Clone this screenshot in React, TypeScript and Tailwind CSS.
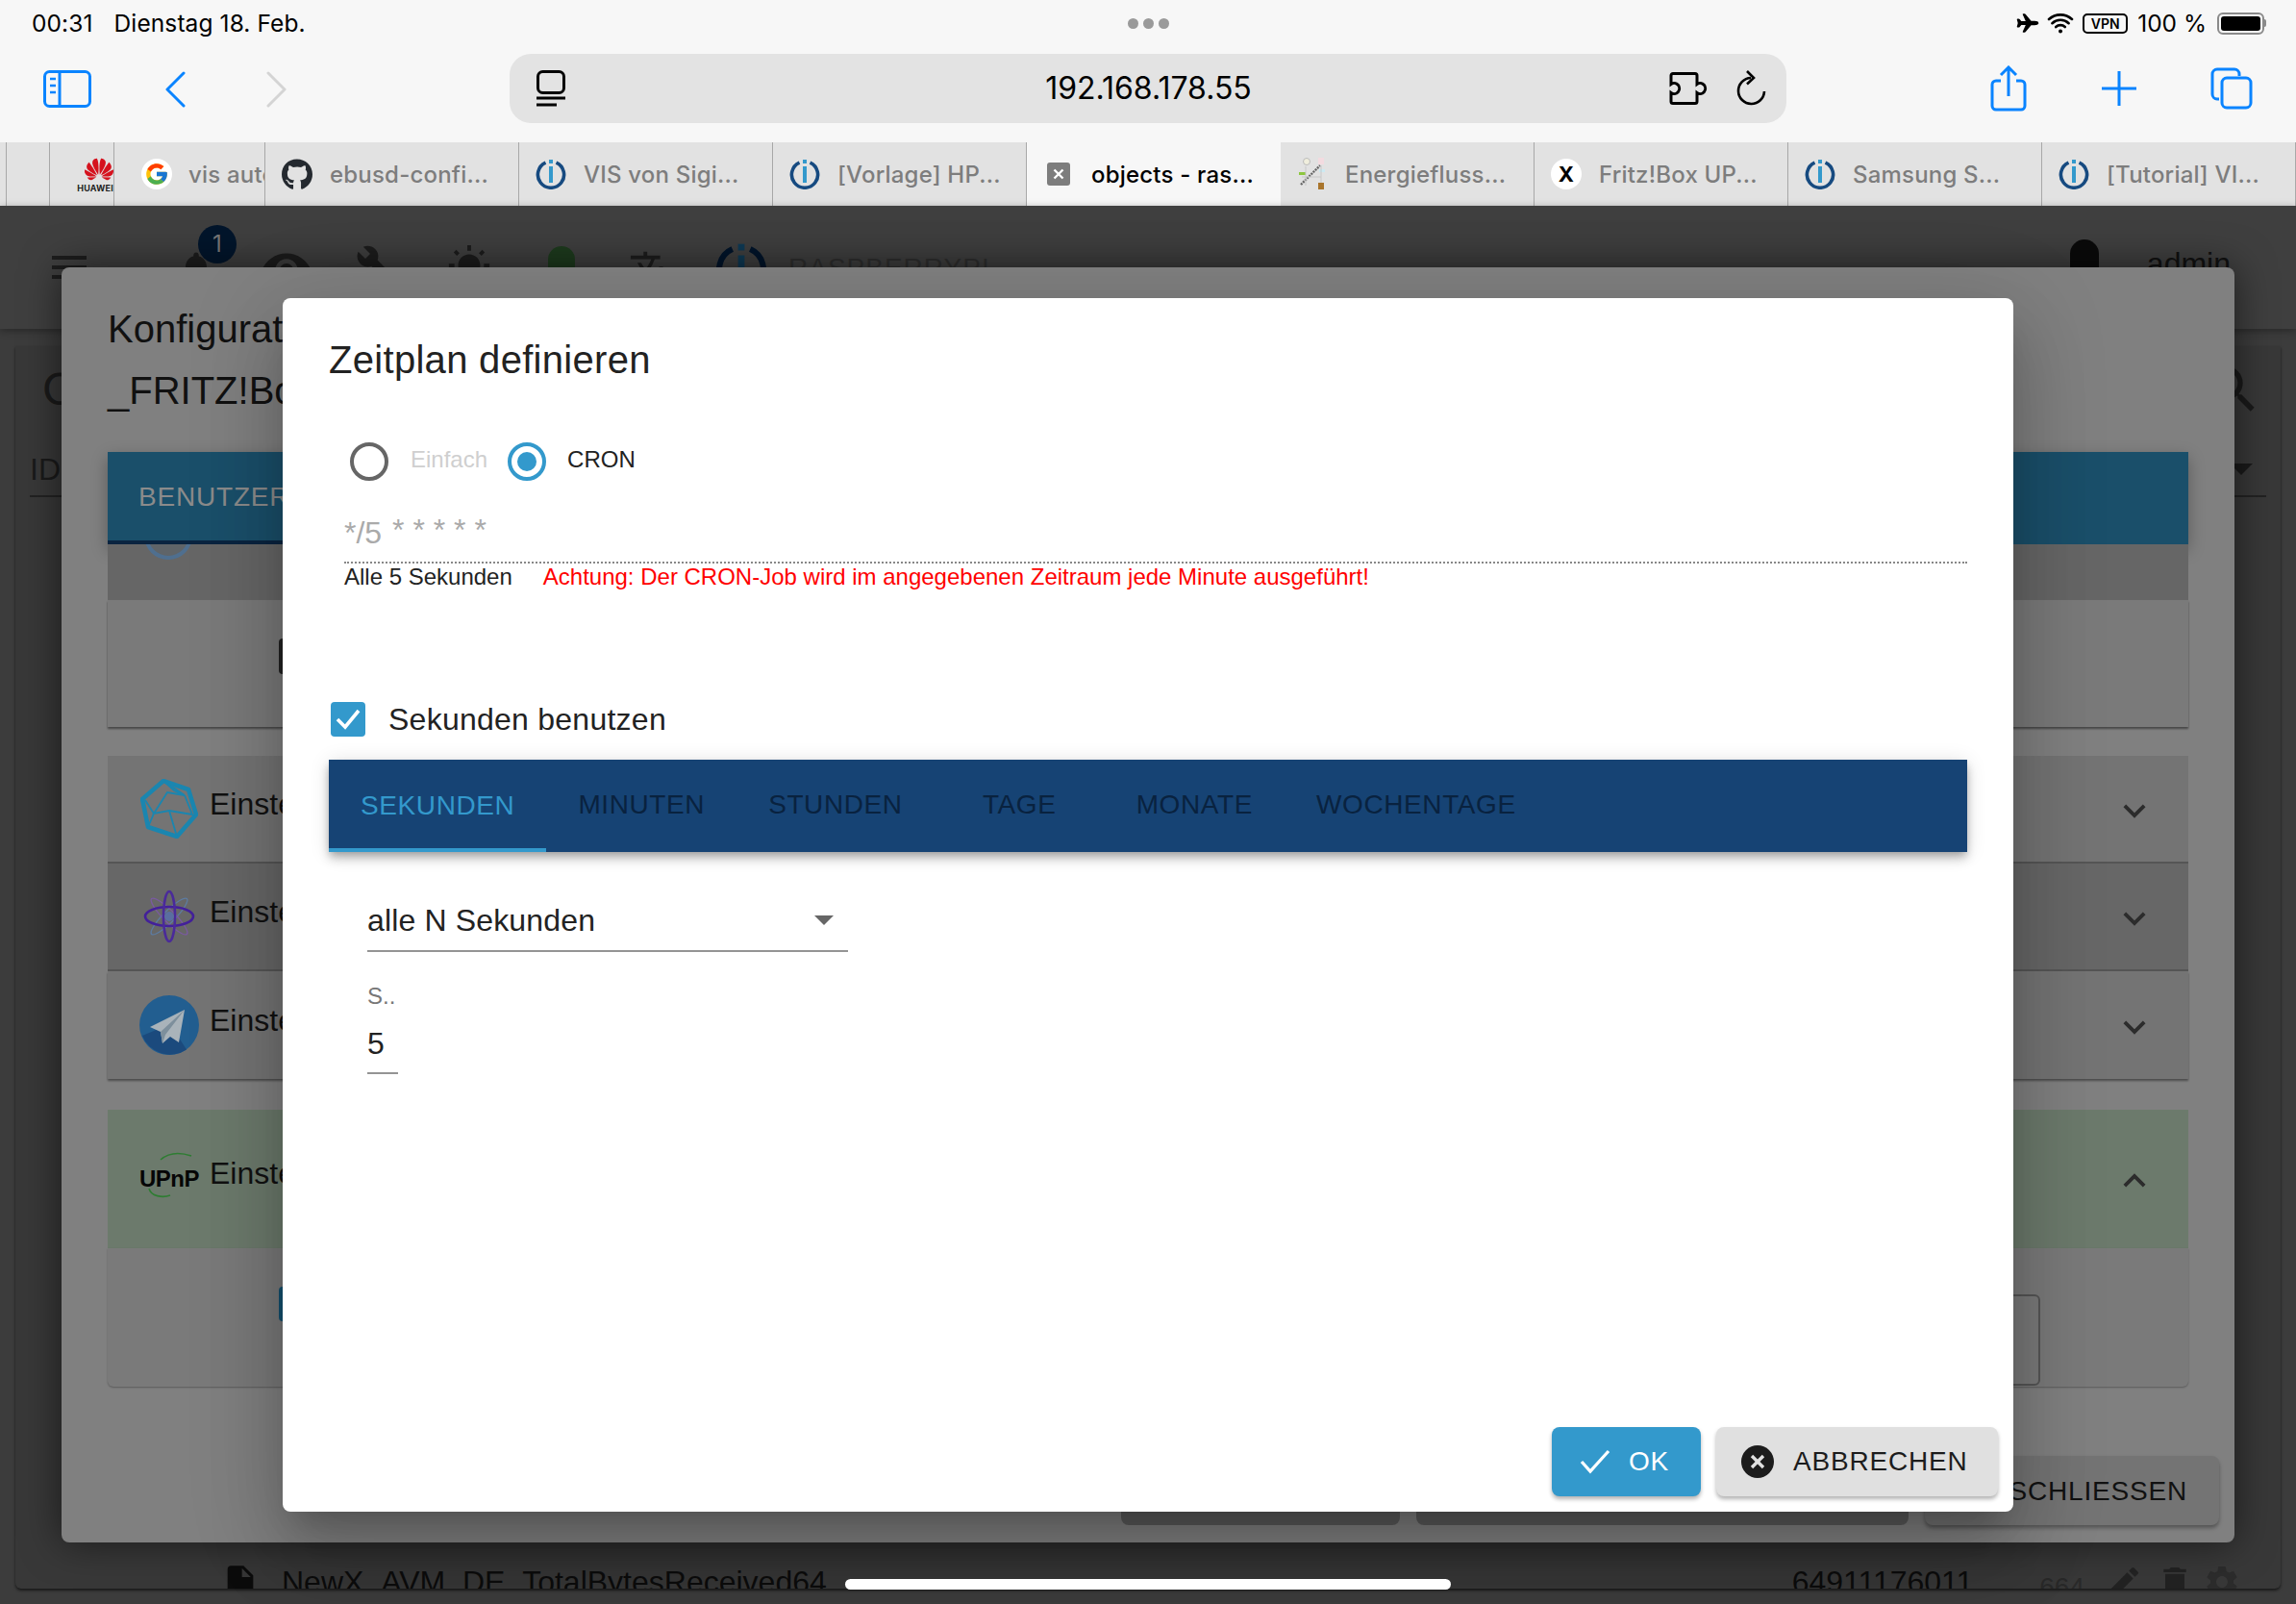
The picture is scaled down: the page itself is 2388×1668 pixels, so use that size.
import type { ReactNode } from "react";
import { FcGoogle } from "react-icons/fc";
import { FaGithub } from "react-icons/fa";
import { SiHuawei } from "react-icons/si";
import { IoAirplane, IoWifi } from "react-icons/io5";
import {
  MdBuild,
  MdDelete,
  MdEdit,
  MdInsertDriveFile,
  MdKeyboardArrowDown,
  MdKeyboardArrowUp,
  MdNotifications,
  MdSearch,
  MdSettings,
  MdTranslate,
  MdVisibility,
  MdWbSunny,
} from "react-icons/md";

const sans = "font-['Liberation_Sans',Arial,sans-serif]";

function BrokerLogo({ size = 32, ring = "#164a80", bar = "#3399cc" }: { size?: number; ring?: string; bar?: string }) {
  return (
    <svg width={size} height={size} viewBox="0 0 32 32" fill="none">
      <path d="M10.5 4.2A13.6 13.6 0 1 0 21.5 4.2" stroke={ring} strokeWidth="3.6" />
      <rect x="14" y="1" width="4" height="4" fill={bar} />
      <rect x="14" y="8" width="4" height="17" fill={bar} />
    </svg>
  );
}

function TabX() {
  return (
    <svg width="24" height="24" viewBox="0 0 24 24">
      <rect width="24" height="24" rx="3" fill="#7d7d7d" />
      <path d="M7.5 7.5l9 9M16.5 7.5l-9 9" stroke="#fff" strokeWidth="2.4" />
    </svg>
  );
}

function EnergyIcon() {
  return (
    <svg width="30" height="40" viewBox="0 0 30 40" fill="none">
      <circle cx="9" cy="7" r="3.5" fill="#f0eedd" stroke="#bbb" />
      <rect x="21" y="3" width="6" height="7" fill="#f3dbe0" />
      <rect x="1" y="18" width="7" height="3" fill="#8dc63f" />
      <rect x="22" y="15" width="6" height="3" fill="#cdeaf2" />
      <rect x="21" y="29" width="6" height="7" fill="#a9752c" />
      <path d="M3 31L23 11" stroke="#666" strokeWidth="2.4" strokeDasharray="2 1" />
      <path d="M8 12v20M24 11v18M4 23h20" stroke="#c8c8c8" />
    </svg>
  );
}

const tabs: { title: string; icon: ReactNode; active?: boolean }[] = [
  { title: "ebusd-confi...", icon: <FaGithub size={33} color="#24292f" /> },
  { title: "VIS von Sigi...", icon: <BrokerLogo /> },
  { title: "[Vorlage] HP...", icon: <BrokerLogo /> },
  { title: "objects - ras...", icon: <TabX />, active: true },
  { title: "Energiefluss...", icon: <EnergyIcon /> },
  {
    title: "Fritz!Box UP...",
    icon: (
      <span className="flex h-[32px] w-[32px] items-center justify-center rounded-full bg-white text-[22px] font-bold text-black">
        X
      </span>
    ),
  },
  { title: "Samsung S...", icon: <BrokerLogo /> },
  { title: "[Tutorial] VI...", icon: <BrokerLogo /> },
];

function StatusBar() {
  return (
    <div className="relative flex h-[48px] items-center justify-between pl-[33px] pr-[31px] text-[24.5px] text-black">
      <div className="flex gap-[22px] tracking-[0.1px]">
        <span>00:31</span>
        <span>Dienstag 18. Feb.</span>
      </div>
      <div className="absolute left-[1173px] top-[19px] flex gap-[5px]">
        <span className="h-[11px] w-[11px] rounded-full bg-[#9a9a9a]" />
        <span className="h-[11px] w-[11px] rounded-full bg-[#9a9a9a]" />
        <span className="h-[11px] w-[11px] rounded-full bg-[#9a9a9a]" />
      </div>
      <div className="flex items-center">
        <IoAirplane size={24} className="mr-[6px]" />
        <IoWifi size={32} className="mr-[7px]" />
        <span className="mr-[10px] flex h-[21px] w-[47px] items-center justify-center rounded-[5px] border-2 border-black text-[14px] font-semibold">
          VPN
        </span>
        <span className="mr-[11px]">100 %</span>
        <div className="flex items-center">
          <div className="h-[23px] w-[49px] rounded-[6px] border-2 border-[#8a8a8a] p-[2px]">
            <div className="h-full w-full rounded-[3px] bg-black" />
          </div>
          <div className="h-[8px] w-[2px] rounded-r bg-[#8a8a8a]" />
        </div>
      </div>
    </div>
  );
}

function Toolbar() {
  return (
    <div className="flex h-[100px] items-start pt-[8px]">
      <svg width="50" height="40" viewBox="0 0 50 40" fill="none" className="ml-[45px] mt-[17px]" stroke="#0a84ff" strokeWidth="3">
        <rect x="1.5" y="1.5" width="47" height="36" rx="5" />
        <path d="M17 2v35" />
        <path d="M7 9h6M7 16h6M7 23h6" strokeWidth="2.5" />
      </svg>
      <svg width="22" height="38" viewBox="0 0 22 38" fill="none" className="ml-[76px] mt-[18px]">
        <path d="M20 2L3 19l17 17" stroke="#0a84ff" strokeWidth="3" strokeLinecap="round" strokeLinejoin="round" />
      </svg>
      <svg width="22" height="38" viewBox="0 0 22 38" fill="none" className="ml-[84px] mt-[18px]">
        <path d="M2 2l17 17L2 36" stroke="#d4d4d4" strokeWidth="3" strokeLinecap="round" strokeLinejoin="round" />
      </svg>
      <div className="ml-[231px] flex h-[72px] w-[1328px] items-center rounded-[22px] bg-[#e3e3e3] pl-[28px] pr-[20px]">
        <svg width="30" height="38" viewBox="0 0 30 38" fill="none" stroke="#000" strokeWidth="3">
          <rect x="1.5" y="1.5" width="27" height="22" rx="5" />
          <path d="M0 29h30M0 36h21" />
        </svg>
        <span className="ml-[66px] flex-1 text-center text-[32px] text-black">192.168.178.55</span>
        <div className="flex items-center">
          <svg width="42" height="34" viewBox="0 0 42 34" fill="none" stroke="#000" strokeWidth="3" className="mr-[2px]">
            <path d="M5 1.500H28a2 2 0 0 1 2 2V12.500a5.500 5.500 0 1 1 0 9V30.500a2 2 0 0 1-2 2H5a2 2 0 0 1-2-2V21.500a5.500 5.500 0 1 0 0-9V3.500a2 2 0 0 1 2-2z" />
          </svg>
          <svg width="32" height="38" viewBox="0 0 32 38" fill="none" stroke="#000" strokeWidth="2.6" className="ml-[27px]">
            <path d="M15 8A13.500 13.500 0 1 0 29 22" />
            <path d="M11 1l7 7-7 6.500" />
          </svg>
        </div>
      </div>
      <svg width="38" height="48" viewBox="0 0 38 48" fill="none" stroke="#0a84ff" strokeWidth="3" className="ml-[212px] mt-[12px]">
        <path d="M11 16H6a4 4 0 0 0-4 4v22a4 4 0 0 0 4 4h26a4 4 0 0 0 4-4V20a4 4 0 0 0-4-4h-5" />
        <path d="M19 32V2M11 10l8-8 8 8" />
      </svg>
      <svg width="36" height="36" viewBox="0 0 36 36" fill="none" stroke="#0a84ff" strokeWidth="3" className="ml-[78px] mt-[18px]">
        <path d="M18 0v36M0 18h36" />
      </svg>
      <svg width="44" height="44" viewBox="0 0 44 44" fill="none" stroke="#0a84ff" strokeWidth="3" className="ml-[77px] mt-[14px]">
        <path d="M9 33H7a5 5 0 0 1-5-5V7a5 5 0 0 1 5-5h18a5 5 0 0 1 5 5v2" />
        <rect x="12" y="11" width="30" height="31" rx="5" />
      </svg>
    </div>
  );
}

function TabStrip() {
  return (
    <div className="flex h-[66px] overflow-hidden bg-[#e2e2e2] text-[24px] font-medium tracking-[0.2px] text-[#7d7d7d]">
      <div className="w-[7px] shrink-0 border-r border-[#a8a8a8]" />
      <div className="w-[45px] shrink-0 border-r border-[#a8a8a8]" />
      <div className="flex w-[67px] shrink-0 flex-col items-end justify-center overflow-hidden border-r border-[#a8a8a8]">
        <SiHuawei size={30} color="#d5121e" />
        <span className="text-[9px] font-bold leading-[10px] text-[#222]">HUAWEI</span>
      </div>
      <div className="flex w-[157px] shrink-0 items-center overflow-hidden whitespace-nowrap border-r border-[#a8a8a8] pl-[28px]">
        <span className="mr-[17px] flex h-[32px] w-[32px] shrink-0 items-center justify-center rounded-full bg-white">
          <FcGoogle size={26} />
        </span>
        <span className="pt-[1px]">vis auto</span>
      </div>
      {tabs.map((tab) => (
        <div
          key={tab.title}
          className={`flex w-[264px] shrink-0 items-center whitespace-nowrap border-r pl-[17px] ${
            tab.active ? "border-transparent bg-[#f7f7f7] text-black" : "border-[#a8a8a8]"
          }`}
        >
          <span className="mr-[18px] flex w-[32px] shrink-0 justify-center">{tab.icon}</span>
          <span className="pt-[1px]">{tab.title}</span>
        </div>
      ))}
    </div>
  );
}

// what is left of the page behind the two dialogs
function PageBehind() {
  return (
    <div className="flex h-[1454px] flex-col">
      <div className="relative flex h-[128px] shrink-0 items-start bg-[#3f3f3f] shadow-[0_2px_8px_rgba(0,0,0,0.35)]">
        <div className="ml-[54px] mt-[52px] flex w-[36px] flex-col gap-[6px]">
          <span className="h-[4px] bg-[#1d1d1d]" />
          <span className="h-[4px] bg-[#1d1d1d]" />
          <span className="h-[4px] bg-[#1d1d1d]" />
        </div>
        <div className="relative ml-[92px] mt-[44px] text-[#1d1d1d]">
          <MdNotifications size={44} />
          <span className="absolute left-[24px] top-[-24px] flex h-[40px] w-[40px] items-center justify-center rounded-full bg-[#02152b] text-[24px] text-[#777]">
            1
          </span>
        </div>
        <MdVisibility size={56} color="#1d1d1d" className="ml-[44px] mt-[39px]" />
        <MdBuild size={40} color="#1d1d1d" className="ml-[44px] mt-[40px]" />
        <MdWbSunny size={46} color="#1d1d1d" className="ml-[55px] mt-[40px]" />
        <span className="ml-[59px] mt-[42px] h-[40px] w-[28px] rounded-full bg-[#1e3b1e]" />
        <MdTranslate size={46} color="#1d1d1d" className="ml-[56px] mt-[44px]" />
        <div className="ml-[44px] mt-[38px]">
          <BrokerLogo size={54} ring="#02152b" bar="#0f3a55" />
        </div>
        <span className={`${sans} ml-[22px] mt-[43px] text-[28px] leading-[44px] tracking-[1px] text-[#2f2f2f]`}>
          RASPBERRYPI
        </span>
        <span className="ml-auto mt-[35px] h-[48px] w-[30px] rounded-full bg-[#0a0a0a]" />
        <span className={`${sans} ml-[50px] mr-[68px] mt-[38px] text-[32px] leading-[44px] text-[#111]`}>admin</span>
      </div>
      <div className="mx-[16px] mt-[18px] flex flex-1 flex-col justify-between overflow-hidden rounded-b-[6px] bg-[#383838] shadow-[0_2px_3px_rgba(0,0,0,0.6)]">
        <div className={`${sans} text-[#1a1a1a]`}>
          <div className="flex items-center justify-between pl-[28px] pr-[18px] pt-[13px]">
            <span className="text-[48px] leading-[60px]">C</span>
            <MdSearch size={64} />
          </div>
          <div className="mx-[15px] mt-[25px] flex h-[55px] items-center justify-between border-b-2 border-[#222] pb-[2px] text-[32px]">
            <span>ID</span>
            <span className="mr-[14px] h-0 w-0 border-x-[12px] border-t-[12px] border-x-transparent border-t-[#1a1a1a]" />
          </div>
        </div>
        <div className={`${sans} flex h-[27px] items-start text-[32px] leading-[40px] text-[#0d0d0d]`}>
          <MdInsertDriveFile size={40} color="#0d0d0d" className="ml-[214px] mr-[23px]" />
          <span>NewX_AVM_DE_TotalBytesReceived64</span>
          <span className="ml-auto">64911176011</span>
          <span className="ml-[69px] pt-[6px] text-[28px] text-[#2a2a2a]">664</span>
          <MdEdit size={40} color="#222" className="ml-[21px]" />
          <MdDelete size={40} color="#222" className="ml-[13px]" />
          <MdSettings size={40} color="#2c2c2c" className="ml-[9px] mr-[41px]" />
        </div>
      </div>
      <div className="h-[16px] shrink-0" />
    </div>
  );
}

function RowChevron({ up }: { up?: boolean }) {
  const Icon = up ? MdKeyboardArrowUp : MdKeyboardArrowDown;
  return <Icon size={46} color="#2c2c2c" className="ml-auto mr-[33px] mt-[3px] shrink-0" />;
}

function ConfigRow({ icon, bg, last }: { icon: ReactNode; bg: string; last?: boolean }) {
  return (
    <div
      className={`flex items-center pl-[33px] ${bg} ${
        last ? "h-[112px] shadow-[0_2px_2px_rgba(0,0,0,0.4)]" : "h-[112px] border-b-2 border-[#555]"
      }`}
    >
      <span className="flex w-[62px] shrink-0 justify-center">{icon}</span>
      <span className="mb-[10px] ml-[11px] text-[32px] text-[#111]">Einstellungen</span>
      <RowChevron />
    </div>
  );
}

function OuterDialog() {
  return (
    <div
      className={`${sans} absolute left-[64px] top-[64px] flex h-[1326px] w-[2260px] flex-col rounded-[8px] bg-[#808080] px-[48px] shadow-[0_0_40px_rgba(0,0,0,0.55)]`}
    >
      <div className="pt-[32px] text-[40px] leading-[64px] text-[#111]">
        Konfiguration
        <br />
        _FRITZ!Box
      </div>
      <div className="mt-[32px] flex h-[96px] shrink-0 bg-[#1a4f6a] shadow-[0_6px_16px_rgba(0,0,0,0.3)]">
        <div className="flex w-[300px] items-center border-b-4 border-[#0a2440] pl-[32px] pt-[2px] text-[28px] tracking-[0.8px] text-[#8b8b8b]">
          BENUTZER
        </div>
      </div>
      <div className="h-[58px] shrink-0 overflow-hidden bg-[#666] pl-[38px]">
        <div className="mt-[-34px] h-[50px] w-[50px] rounded-full border-[4px] border-[#4f6f8f] bg-[#5f6468]" />
      </div>
      <div className="flex h-[132px] shrink-0 items-start bg-[#7a7a7a] pt-[40px] shadow-[0_2px_2px_rgba(0,0,0,0.45)]">
        <div className="ml-[178px] h-[37px] w-[60px] rounded-[4px] bg-[#222]" />
      </div>
      <div className="mt-[30px] shrink-0">
        <ConfigRow
          bg="bg-[#747474]"
          icon={
            <svg width="60" height="62" viewBox="0 0 60 62" fill="none" stroke="#1a86b0" strokeWidth="1.8">
              <path d="M24 2L50 11L58 37L38 60L8 50L2 21Z" strokeWidth="4.500" strokeLinejoin="round" />
              <path d="M24 2L46 17L35 12ZM46 17L54 37L30 33L14 36L28 14L46 17M30 33L38 60M14 36L8 50M14 36L5 22" />
            </svg>
          }
        />
        <ConfigRow
          bg="bg-[#676767]"
          icon={
            <svg width="54" height="56" viewBox="0 0 54 56" fill="none">
              <ellipse cx="27" cy="28" rx="6" ry="26" stroke="#5d7ba0" strokeWidth="1.4" transform="rotate(45 27 28)" />
              <ellipse cx="27" cy="28" rx="6" ry="26" stroke="#7a5aa0" strokeWidth="1.4" transform="rotate(-45 27 28)" />
              <ellipse cx="27" cy="28" rx="25" ry="10" stroke="#43209a" strokeWidth="2.6" />
              <ellipse cx="27" cy="28" rx="6" ry="26" stroke="#4a2a9a" strokeWidth="2.6" />
              <circle cx="27" cy="28" r="5" fill="#5a6ea0" />
            </svg>
          }
        />
        <ConfigRow
          last
          bg="bg-[#747474]"
          icon={
            <svg width="62" height="62" viewBox="0 0 62 62">
              <circle cx="31" cy="31" r="31" fill="#225e90" />
              <path d="M3 42a31 31 0 0 0 46 14.500L32 30z" fill="#1b4a7d" />
              <path d="M47 15L11 33l11 5 2 12 8-7 9 6z" fill="#a9b3ba" />
              <path d="M47 15L22 38l2 12 3-9z" fill="#7d8f9c" />
            </svg>
          }
        />
      </div>
      <div className="mt-[32px] flex h-[144px] shrink-0 items-center bg-[#6c7a6c] pl-[33px]">
        <span className="relative flex w-[62px] justify-center text-[24px] font-bold tracking-[-0.5px] text-[#060606]">
          UPnP
          <svg width="62" height="52" viewBox="0 0 62 52" fill="none" className="absolute left-0 top-[-12px]">
            <path d="M22 10C30 3 42 2 54 6" stroke="#2e7d32" strokeWidth="1.6" />
            <path d="M10 40C12 48 24 50 32 47" stroke="#2e7d32" strokeWidth="1.6" />
          </svg>
        </span>
        <span className="mb-[12px] ml-[11px] text-[32px] text-[#111]">Einstellungen</span>
        <RowChevron up />
      </div>
      <div className="flex h-[144px] shrink-0 justify-between rounded-b-[6px] bg-[#7a7a7a] pr-[154px] shadow-[0_1px_2px_rgba(0,0,0,0.3)]">
        <div className="ml-[178px] mt-[40px] h-[36px] w-[60px] rounded-[4px] bg-[#14506f]" />
        <div className="mt-[48px] h-[95px] w-[200px] rounded-[6px] border-2 border-[#555]" />
      </div>
      <div className="mr-[-32px] mt-[72px] flex h-[72px] shrink-0 justify-end gap-[17px] text-[28px] text-[#111]">
        <div className="w-[290px] rounded-[8px] bg-[#5c5c5c]" />
        <div className="w-[512px] rounded-[8px] bg-[#5c5c5c]" />
        <div className="flex w-[306px] items-center justify-end rounded-[8px] bg-[#747474] pr-[33px] pt-[2px] tracking-[0.8px] shadow-[0_3px_4px_rgba(0,0,0,0.35)]">
          SCHLIESSEN
        </div>
      </div>
    </div>
  );
}

function Radio({ checked }: { checked?: boolean }) {
  return (
    <span
      className={`flex h-[40px] w-[40px] shrink-0 items-center justify-center rounded-full border-[4px] ${
        checked ? "border-[#3399cc]" : "border-[#666]"
      }`}
    >
      {checked && <span className="h-[20px] w-[20px] rounded-full bg-[#3399cc]" />}
    </span>
  );
}

const scheduleTabs = ["SEKUNDEN", "MINUTEN", "STUNDEN", "TAGE", "MONATE", "WOCHENTAGE"];

function ScheduleDialog() {
  return (
    <div
      className={`${sans} absolute left-[294px] top-[96px] flex h-[1262px] w-[1800px] flex-col rounded-[8px] bg-white px-[48px] shadow-[0_22px_30px_-14px_rgba(0,0,0,0.2),0_48px_76px_6px_rgba(0,0,0,0.14),0_18px_92px_16px_rgba(0,0,0,0.12)]`}
    >
      <h2 className="pt-[39px] text-[40px] leading-[50px] tracking-[0.3px] text-[#222]">Zeitplan definieren</h2>

      <div className="ml-[22px] mt-[61px] flex h-[40px] items-center text-[24px]">
        <Radio />
        <span className="mb-[4px] ml-[23px] mr-[21px] text-[#cfcfcf]">Einfach</span>
        <Radio checked />
        <span className="mb-[4px] ml-[22px] text-[#222]">CRON</span>
      </div>

      <div className="ml-[16px] mt-[31px] border-b-2 border-dotted border-[#888] pb-[10px] text-[32px] leading-[40px] text-[#aaa]">
        */5 <span className="ml-[2px] align-[3px]">* * * * *</span>
      </div>
      <div className="ml-[16px] flex text-[24px] leading-[28px]">
        <span className="text-[#222]">Alle 5 Sekunden</span>
        <span className="ml-[32px] text-[#f00]">Achtung: Der CRON-Job wird im angegebenen Zeitraum jede Minute ausgeführt!</span>
      </div>

      <div className="ml-[2px] mt-[116px] flex h-[36px] items-center">
        <span className="flex h-[36px] w-[36px] items-center justify-center rounded-[4px] bg-[#3399cc]">
          <svg width="28" height="24" viewBox="0 0 28 24" fill="none">
            <path d="M3 12l8 8L25 3" stroke="#fff" strokeWidth="3.6" />
          </svg>
        </span>
        <span className="ml-[24px] text-[32px] tracking-[0.25px] text-[#222]">Sekunden benutzen</span>
      </div>

      <div className="mt-[24px] flex h-[96px] shrink-0 bg-[#164374] shadow-[0_4px_8px_-2px_rgba(0,0,0,0.25),0_8px_10px_rgba(0,0,0,0.14),0_2px_20px_rgba(0,0,0,0.12)]">
        {scheduleTabs.map((tab, i) => (
          <div
            key={tab}
            className={`flex min-w-[177px] items-center justify-center px-[33px] text-[28px] tracking-[0.6px] ${
              i === 0 ? "border-b-4 border-[#3399cc] pt-[4px] text-[#3399cc]" : "pb-[2px] text-[#09223f]"
            }`}
          >
            {tab}
          </div>
        ))}
      </div>

      <div className="ml-[40px] mt-[47px] flex w-[500px] items-center justify-between border-b-2 border-[#949494] pb-[7px] pr-[15px] text-[32px] leading-[48px] tracking-[0.15px] text-[#222]">
        alle N Sekunden
        <span className="h-0 w-0 border-x-[10px] border-t-[10px] border-x-transparent border-t-[#666]" />
      </div>
      <div className="ml-[40px] mt-[32px] text-[24px] leading-[28px] text-[#777]">S..</div>
      <div className="ml-[40px] mt-[15px] w-[32px] border-b-2 border-[#949494] pb-[10px] text-[32px] leading-[40px] text-[#222]">
        5
      </div>

      <div className="mb-[16px] mr-[-32px] mt-auto flex justify-end gap-[16px] text-[28px]">
        <div className="flex h-[72px] w-[155px] items-center rounded-[8px] bg-[#3399cc] pl-[29px] tracking-[0.8px] text-white shadow-[0_3px_4px_rgba(0,0,0,0.3)]">
          <svg width="32" height="26" viewBox="0 0 32 26" fill="none" className="mr-[19px]">
            <path d="M2 13l9 10L30 2" stroke="#fff" strokeWidth="3.2" />
          </svg>
          OK
        </div>
        <div className="flex h-[72px] w-[293px] items-center rounded-[8px] bg-[#e0e0e0] pl-[26px] tracking-[0.8px] text-[#1c1c1c] shadow-[0_3px_4px_rgba(0,0,0,0.3)]">
          <svg width="34" height="34" viewBox="0 0 34 34" className="mr-[20px]">
            <circle cx="17" cy="17" r="17" fill="#1c1c1c" />
            <path d="M11 11l12 12M23 11L11 23" stroke="#e0e0e0" strokeWidth="3.4" />
          </svg>
          ABBRECHEN
        </div>
      </div>
    </div>
  );
}

export default function App() {
  return (
    <div className="relative flex h-[1668px] w-[2388px] flex-col overflow-hidden bg-[#3c3c3c] font-['Inter',sans-serif]">
      <div className="bg-[#f7f7f7]">
        <StatusBar />
        <Toolbar />
        <TabStrip />
      </div>
      <div className="relative flex-1">
        <PageBehind />
        <OuterDialog />
        <ScheduleDialog />
        <div className="absolute left-[879px] top-[1428px] h-[11px] w-[630px] rounded-full bg-white" />
      </div>
    </div>
  );
}
